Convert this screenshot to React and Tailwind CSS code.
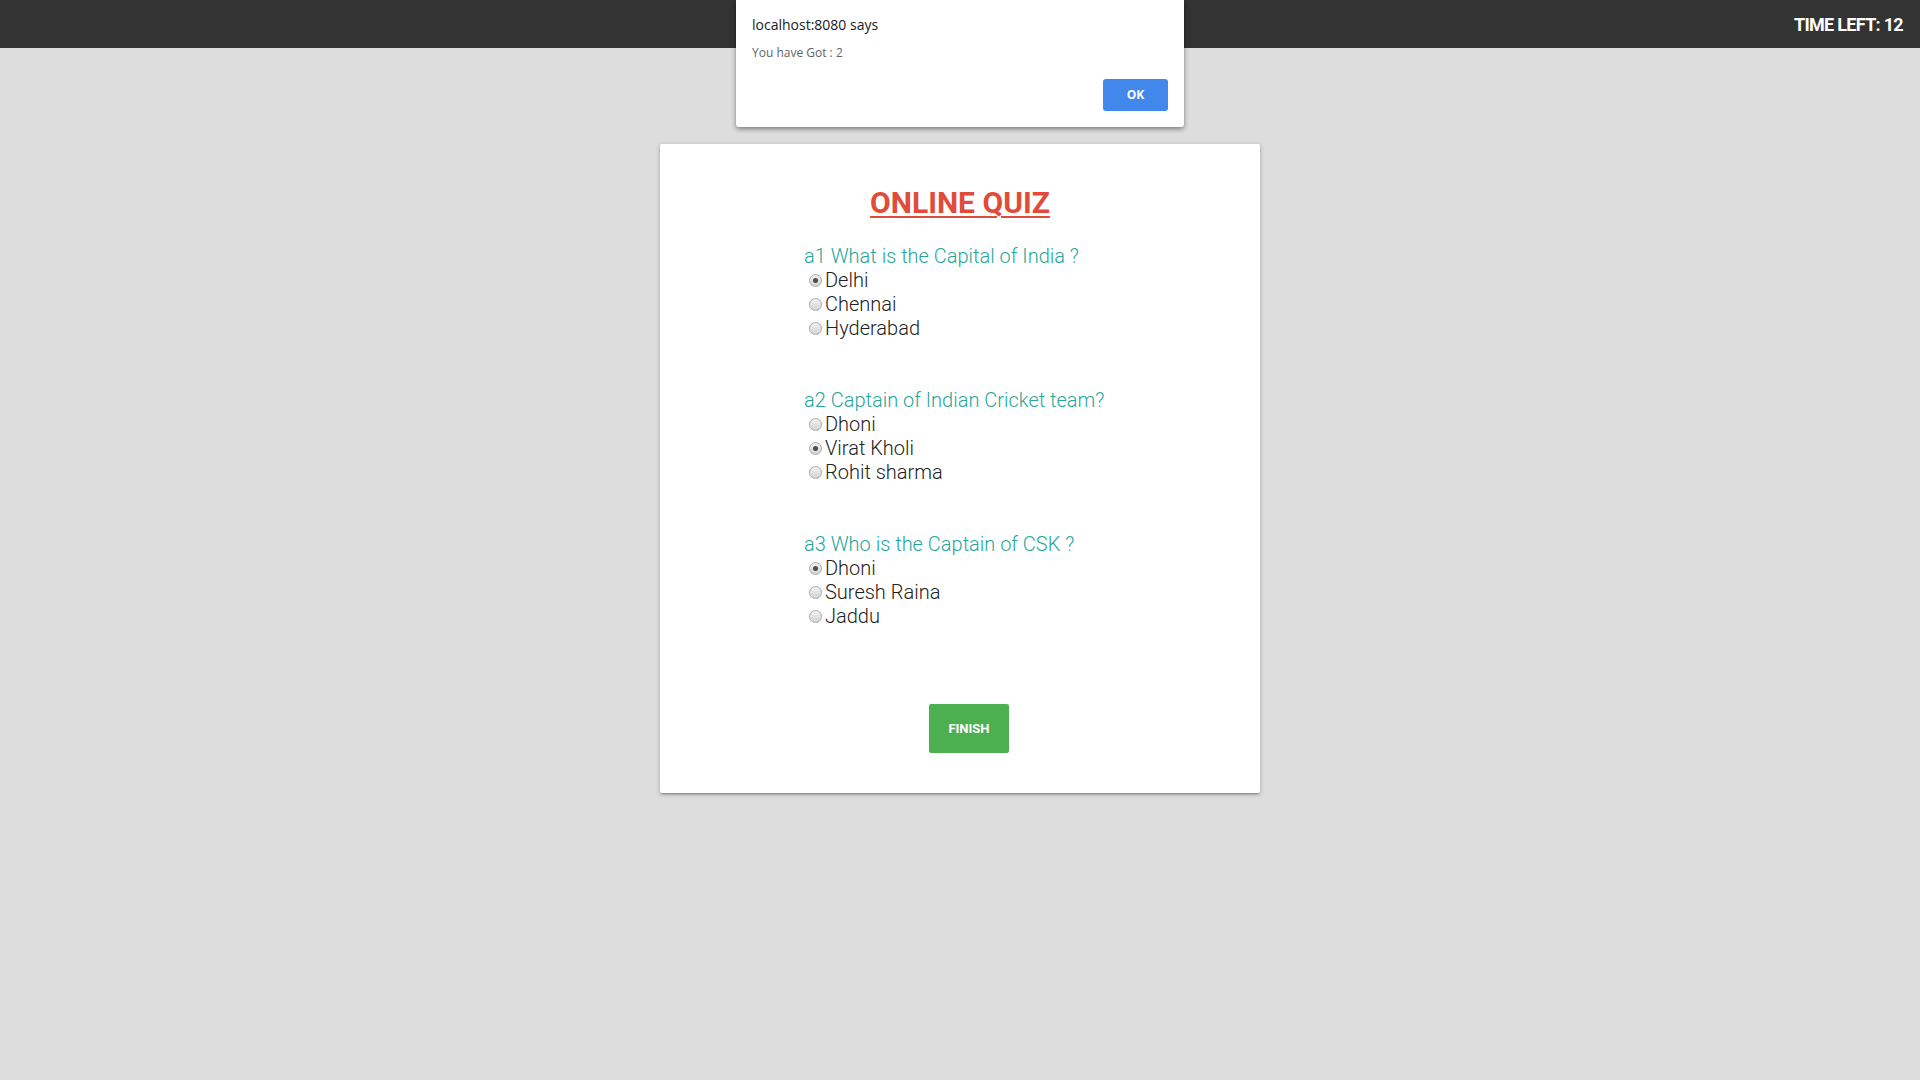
import React from "react";

const questions = [
  {
    id: "a1",
    text: "a1 What is the Capital of India ?",
    options: ["Delhi", "Chennai", "Hyderabad"],
    picked: 0,
  },
  {
    id: "a2",
    text: "a2 Captain of Indian Cricket team?",
    options: ["Dhoni", "Virat Kholi", "Rohit sharma"],
    picked: 1,
  },
  {
    id: "a3",
    text: "a3 Who is the Captain of CSK ?",
    options: ["Dhoni", "Suresh Raina", "Jaddu"],
    picked: 0,
  },
];

function Radio({ checked }) {
  return (
    <span className="ml-[5px] mr-[3px] flex h-[13px] w-[13px] shrink-0 items-center justify-center rounded-full border border-[#a9a9a9] bg-gradient-to-b from-[#f2f2f2] to-[#d4d4d4]">
      {checked && <span className="h-[5px] w-[5px] rounded-full bg-[#4d4d4d]" />}
    </span>
  );
}

function Question({ q }) {
  return (
    <div className="flex flex-col">
      <p className="text-[20px] leading-6 font-light text-[#26a69a]">{q.text}</p>
      {q.options.map((opt, i) => (
        <label key={opt} className="flex items-center text-[20px] leading-6 font-light text-[#222]">
          <Radio checked={i === q.picked} />
          {opt}
        </label>
      ))}
    </div>
  );
}

export default function App() {
  return (
    <div className="relative min-h-[1080px] bg-[#dddddd] font-['Roboto',sans-serif]">
      {/* top bar */}
      <header className="flex h-12 items-center justify-end bg-[#333333] pr-[17px]">
        <span className="text-[18px] font-bold tracking-[-0.7px] text-white">TIME LEFT: 12</span>
      </header>

      {/* alert dialog */}
      <div className="absolute left-[736px] top-0 w-[448px] rounded-b-[3px] bg-white px-4 pb-4 pt-[15px] shadow-[0_2px_5px_rgba(0,0,0,0.45)] font-['Open_Sans',sans-serif]">
        <p className="text-[14px] leading-5 text-[#202124]">localhost:8080 says</p>
        <p className="mt-[10px] text-[12px] leading-4 text-[#5f6368]">You have Got : 2</p>
        <div className="mt-[18px] flex justify-end">
          <button className="h-8 w-[65px] rounded-[3px] bg-[#4187ec] text-[12px] font-bold text-white">
            OK
          </button>
        </div>
      </div>

      {/* quiz card */}
      <main className="flex justify-center pt-24">
        <div className="flex h-[649px] w-[600px] flex-col rounded-[2px] bg-white pt-[41px] pb-10 shadow-[0_2px_2px_0_rgba(0,0,0,0.14),0_3px_1px_-2px_rgba(0,0,0,0.12),0_1px_5px_0_rgba(0,0,0,0.2)]">
          <h1 className="text-center text-[30px] leading-9 font-bold text-[#e04b3a] underline decoration-2 underline-offset-[3px]">
            ONLINE QUIZ
          </h1>
          <div className="mt-[23px] flex flex-col gap-12 pl-[144px]">
            {questions.map((q) => (
              <Question key={q.id} q={q} />
            ))}
          </div>
          <div className="mt-[76px] pl-[269px]">
            <button className="h-[49px] w-20 rounded-[2px] bg-[#4caf50] text-[13px] font-bold text-white">
              FINISH
            </button>
          </div>
        </div>
      </main>
    </div>
  );
}
